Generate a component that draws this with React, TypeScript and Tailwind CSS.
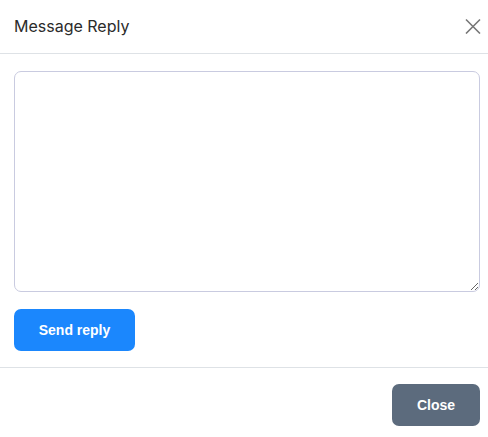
import React, { useState } from 'react';

const App = () => {
  const [reply, setReply] = useState('');

  return (
    <div className="w-[488px] h-[437px] bg-white overflow-hidden" style={{ fontFamily: 'Inter, "Liberation Sans", sans-serif' }}>
      <div className="flex items-center justify-between h-[54px] pl-[14px] pr-[7px] pb-[1px] border-b border-[#dee2e6]">
        <h5 className="text-[16px] text-[#2b2b2b] leading-none">Message Reply</h5>
        <button className="w-[16px] h-[16px] text-[#777]" aria-label="Close">
          <svg width="16" height="16" viewBox="0 0 16 16" fill="none" stroke="currentColor" strokeWidth="1.6">
            <path d="M1 1.5 L15 15.5 M15 1.5 L1 15.5" />
          </svg>
        </button>
      </div>

      <div className="pl-[14px] pr-[8px] pt-[17px] pb-[16px] border-b border-[#dee2e6]">
        <textarea
          value={reply}
          onChange={(e) => setReply(e.target.value)}
          className="block w-[466px] h-[221px] border border-[#c9cbe0] rounded-[7px] p-2 text-sm outline-none"
        />
        <button className="mt-[17px] w-[121px] h-[42px] rounded-[7px] bg-[#1b87fd] text-white text-[14px] font-bold" style={{ fontFamily: '"Liberation Sans", Arial, sans-serif' }}>
          Send reply
        </button>
      </div>

      <div className="flex justify-end pt-[16px] pr-[8px]">
        <button className="w-[88px] h-[42px] rounded-[7px] bg-[#5c6b7d] text-white text-[14px] font-bold" style={{ fontFamily: '"Liberation Sans", Arial, sans-serif' }}>
          Close
        </button>
      </div>
    </div>
  );
};

export default App;
